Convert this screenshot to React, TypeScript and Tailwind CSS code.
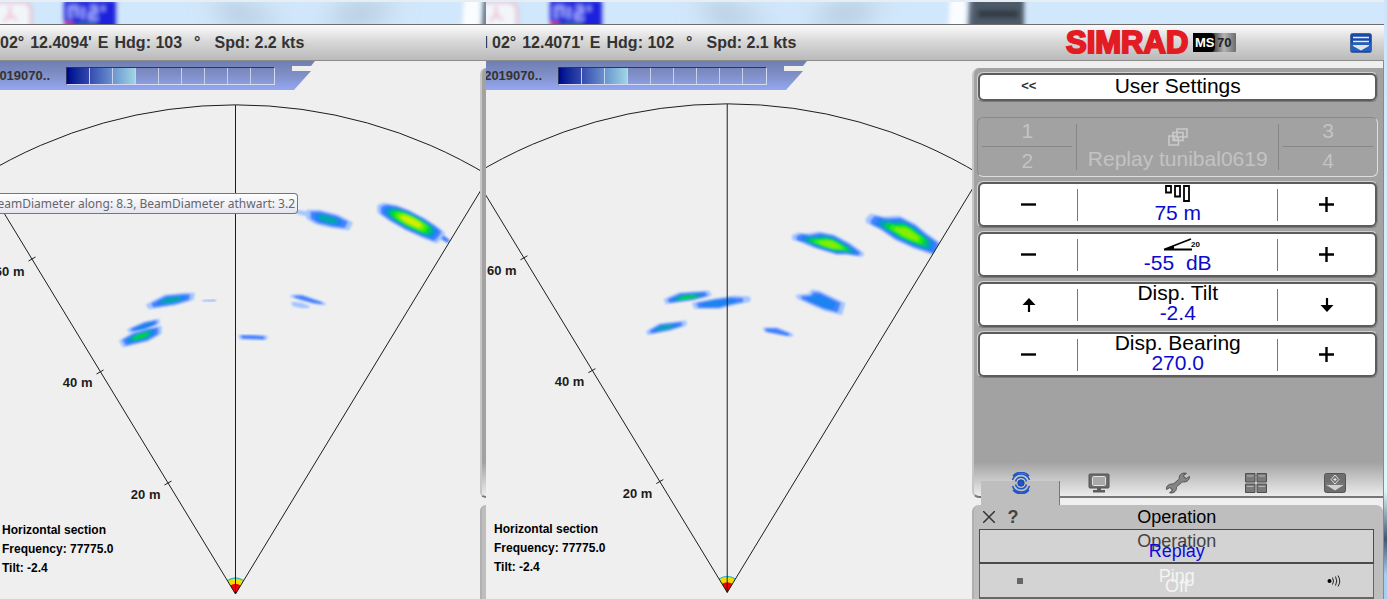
import React from "react";

type Point = [number, number];

interface EchoData {
  core: Point;
  points: Point[];
  level: number;
}

// Palette from weak to strong echo
const ECHO_COLORS = ["#a3c6ff", "#4580ff", "#1a84f0", "#00a8a8", "#00d23c", "#2cf000", "#86ee00", "#d2f000"];

// All echo coordinates are relative to the transducer
const LEFT_ECHOES: EchoData[] = [
  { core: [209, -355], level: 2, points: [[205, -360], [214, -353], [212, -352], [204, -357]] },
  { core: [176, -373], level: 8, points: [[143, -388], [148, -390], [160, -388], [175, -382], [190, -374], [202, -366], [208, -361], [205, -356], [201, -352], [190, -356], [170, -365], [154, -374], [143, -382]] },
  { core: [66, -381], level: 1, points: [[62, -383], [72, -381], [72, -379], [62, -381]] },
  { core: [92, -375], level: 4, points: [[72, -383], [84, -383], [103, -378], [116, -371], [113, -365], [97, -367], [80, -371], [72, -376]] },
  { core: [-64, -294], level: 4, points: [[-88, -289], [-71, -298], [-50, -300], [-42, -300], [-43, -295], [-60, -290], [-86, -286]] },
  { core: [-91, -268], level: 3, points: [[-107, -264], [-91, -271], [-77, -274], [-77, -271], [-91, -264], [-105, -262]] },
  { core: [-95, -258], level: 5, points: [[-115, -253], [-103, -260], [-86, -265], [-75, -267], [-75, -261], [-87, -254], [-112, -248]] },
  { core: [-27, -293], level: 1, points: [[-32, -293], [-21, -294], [-21, -293], [-32, -293]] },
  { core: [73, -295], level: 2, points: [[56, -298], [66, -298], [89, -290], [80, -291], [65, -295]] },
  { core: [65, -289], level: 1, points: [[57, -291], [66, -290], [73, -287], [66, -287], [58, -289]] },
  { core: [17, -257], level: 2, points: [[4, -258], [16, -258], [31, -257], [30, -255], [5, -256]] },
];

const RIGHT_ECHOES: EchoData[] = [
  { core: [181, -359], level: 7, points: [[140, -374], [144, -378], [157, -375], [172, -376], [188, -368], [200, -358], [214, -348], [212, -337], [188, -345], [168, -354], [152, -365], [140, -371]] },
  { core: [104, -348], level: 7, points: [[66, -357], [71, -359], [80, -358], [92, -360], [107, -357], [122, -349], [136, -339], [134, -337], [122, -339], [110, -339], [87, -346], [73, -352], [66, -354]] },
  { core: [-40, -295], level: 5, points: [[-62, -293], [-48, -299], [-19, -301], [-17, -298], [-32, -294], [-61, -290]] },
  { core: [-13, -289], level: 3, points: [[-34, -289], [-13, -293], [7, -296], [22, -295], [22, -292], [7, -289], [-8, -285], [-32, -285]] },
  { core: [-63, -265], level: 4, points: [[-80, -261], [-68, -268], [-42, -271], [-42, -268], [-58, -263], [-79, -259]] },
  { core: [94, -291], level: 3, points: [[70, -297], [82, -298], [85, -302], [92, -301], [117, -289], [114, -279], [98, -283], [82, -290], [71, -295]] },
  { core: [47, -261], level: 2, points: [[37, -264], [50, -264], [65, -258], [64, -257], [48, -260], [38, -262]] },
];

const Echo: React.FC<EchoData> = ({ core, points, level }) => (
  <g filter="url(#echo-soft)" strokeLinejoin="round">
    {ECHO_COLORS.slice(0, level).map((color, i) => {
      const scale = 1 - (i * 0.8) / Math.max(level, 4);
      const d = points
        .map(([x, y]) => `${core[0] + (x - core[0]) * scale},${core[1] + (y - core[1]) * scale}`)
        .join(" ");
      return <polygon key={color} points={d} fill={color} stroke={color} strokeWidth={2.5 * scale} />;
    })}
  </g>
);

interface SonarPlotProps {
  width: number;
  apex: Point;
  echoes: EchoData[];
}

const SonarPlot: React.FC<SonarPlotProps> = ({ width, apex, echoes }) => (
  <svg viewBox={`0 0 ${width} 509`} className="block w-full" role="img" aria-label="Sonar sector">
    <defs>
      <filter id="echo-soft" x="-20%" y="-50%" width="140%" height="200%">
        <feGaussianBlur stdDeviation="1" />
      </filter>
      <clipPath id="sector">
        <path d="M-254 -418 A489 489 0 0 1 254 -418 L0 0 Z" />
      </clipPath>
    </defs>
    <g transform={`translate(${apex[0]} ${apex[1]})`}>
      <g clipPath="url(#sector)">
        {echoes.map((echo) => (
          <Echo key={echo.core.join()} {...echo} />
        ))}
      </g>
      <path d="M0 0 L-8.5 -14 A16 16 0 0 1 8.5 -14 Z" fill="#35b6c8" />
      <path d="M0 0 L-7.8 -13 A15 15 0 0 1 7.8 -13 Z" fill="#f2dc00" />
      <path d="M0 0 L-5.2 -8.6 A10 10 0 0 1 5.2 -8.6 Z" fill="#f00000" />
      <g fill="none" stroke="#1c1c1c">
        <path d="M-254 -418 A489 489 0 0 1 254 -418 L0 0 Z" />
        <path d="M0 0 V-489" />
        <path d="M-207 -333 l7 -4 M-139 -220 l7 -4 M-71 -109 l7 -4" />
      </g>
      <g fill="#1c1c1c" fontSize="13" fontWeight="bold" textAnchor="end">
        <text x="-211" y="-318">60 m</text>
        <text x="-143" y="-207">40 m</text>
        <text x="-75" y="-95">20 m</text>
      </g>
    </g>
  </svg>
);

const SectionInfo: React.FC<{ className: string }> = ({ className }) => (
  <div className={`absolute text-[12px] leading-[19px] font-bold text-black ${className}`}>
    <p>Horizontal section</p>
    <p>Frequency: 77775.0</p>
    <p>Tilt: -2.4</p>
  </div>
);

const Backdrop: React.FC<{ dark?: boolean }> = ({ dark }) => (
  <div className="h-6 overflow-hidden border-t-2 border-[#e6eef4] bg-[#d1e7fb]">
    <svg className="block h-6 w-full" aria-hidden="true">
      <defs>
        <filter id="far-blur" x="-20%" y="-50%" width="140%" height="200%">
          <feGaussianBlur stdDeviation="2" />
        </filter>
        <filter id="wide-blur" x="-50%" y="-100%" width="200%" height="300%">
          <feGaussianBlur stdDeviation="12" />
        </filter>
      </defs>
      <path d="M210 0h30l50 24h-60z M350 0h50l-30 24h-50z" fill="#b3c8dc" filter="url(#wide-blur)" />
      <g filter="url(#far-blur)">
        <rect x="-20" y="0" width="51" height="34" rx="8" fill="#f1f6fa" stroke="#e8bfd2" strokeWidth="3" />
        <path d="M10 4v9l-6 6M10 13l7 5" stroke="#f0a9c4" strokeWidth="2" fill="none" />
        <rect x="64" y="-2" width="52" height="30" fill="#1b22dc" />
        <path d="M70 17V5h7v10M83 5v12M90 5h6v6h-6v6h8M103 4v5" stroke="#a9b2ff" strokeWidth="3" fill="none" />
        <path d="M64 22h9" stroke="#d84a6a" strokeWidth="4" />
        <path d="M76 23h20" stroke="#2d8a7a" strokeWidth="3" />
        <path d="M464 -4h16v34h-18z" fill="#fafdff" />
        <path d="M483 -4h6v34h-8z" fill="#6d7c8e" />
        {dark && <path d="M487 -4h51v34h-54z" fill="#4d5a68" />}
        {dark && <path d="M492 12h40" stroke="#303a45" strokeWidth="8" />}
      </g>
    </svg>
  </div>
);

interface NavReadoutProps {
  minutes: string;
  heading: string;
  speed: string;
}

const NavReadout: React.FC<NavReadoutProps> = ({ minutes, heading, speed }) => (
  <div className="flex shrink-0 gap-1.5 text-base font-bold whitespace-pre text-[#333]">
    <span>02°</span>
    <span>{minutes}'</span>
    <span>E</span>
    <span>Hdg: {heading}</span>
    <span className="pl-1.5">°</span>
    <span className="pl-2">Spd: {speed} kts</span>
  </div>
);

const headerClass =
  "flex h-[37px] items-center overflow-hidden border-y border-t-[#6e6e6e] border-b-[#8c8c8c] bg-linear-to-b from-[#fbfbfb] via-[#d6d6d6] to-[#bababa]";

const FileTab: React.FC<{ name: string; className: string }> = ({ name, className }) => (
  <div
    className={`flex h-[29px] items-center bg-linear-to-b from-[#6f7fb2] via-[#8090c8] to-[#95a7f3] pr-10 [clip-path:polygon(0_0,100%_0,calc(100%-4px)_5px,calc(100%-23px)_5px,calc(100%-23px)_10px,calc(100%-4px)_10px,calc(100%-21px)_100%,0_100%)] ${className}`}
  >
    <div className="flex min-w-0 flex-1 justify-end overflow-hidden pr-4 text-[13px] font-bold text-[#333]">{name}</div>
    <div className="grid h-[18px] w-[209px] grid-cols-9 divide-x divide-[#c9d0ea] border border-t-[#2c3562] border-r-[#d5dbf3] border-b-[#d5dbf3] border-l-[#2c3562]">
      <span className="bg-linear-to-r from-[#00008b] to-[#3346aa]" />
      <span className="bg-linear-to-r from-[#354bb0] to-[#6b8fcb]" />
      <span className="bg-linear-to-r from-[#6a96cf] to-[#a0d4e2]" />
      <span /><span /><span /><span /><span /><span />
    </div>
  </div>
);

const upperPanelClass =
  "rounded-l-[7px] border-l-2 border-b-2 border-l-[#c6c6c6] border-b-[#777] bg-[linear-gradient(to_top,#ececec_0,#a2a2a2_34px)]";
const lowerPanelClass = "rounded-t-[7px] border-l-2 border-l-[#b0b0b0] bg-[#bebebe]";
const rowFrameClass = "rounded-md border border-[#d2d2d2] border-r-[#8c8c8c] border-b-[#7c7c7c]";

const MinusIcon = () => (
  <svg width="15" height="15" viewBox="0 0 15 15"><path d="M0 7.5h15" stroke="#000" strokeWidth="2.4" /></svg>
);
const PlusIcon = () => (
  <svg width="15" height="15" viewBox="0 0 15 15"><path d="M0 7.5h15M7.5 0v15" stroke="#000" strokeWidth="2.4" /></svg>
);
const ArrowIcon: React.FC<{ down?: boolean }> = ({ down }) => (
  <svg width="14" height="14" viewBox="0 0 14 14" className={down ? "rotate-180" : ""}>
    <path d="M7 0l6.5 7h-13z" />
    <path d="M7 4v10" stroke="#000" strokeWidth="2.2" />
  </svg>
);

const RangeIcon = () => (
  <svg width="26" height="18" viewBox="0 0 26 18" fill="none" stroke="#000" strokeWidth="1.8">
    <path d="M1 2h5v6.5H1zM10 2h5v10.500h-5zM19 2h5v15h-5z" />
  </svg>
);

const GainIcon = () => (
  <svg width="38" height="20" viewBox="0 0 38 20" className="overflow-visible">
    <path d="M5 16.500L32 6M5 16.500h28" stroke="#000" strokeWidth="1.800" fill="none" />
    <path d="M5 16.500l10-4v4z" />
    <text x="32" y="14" fontSize="8" fontWeight="bold">20</text>
  </svg>
);

interface SettingRowProps {
  label: React.ReactNode;
  name: string;
  value: string;
  arrows?: boolean;
}

const SettingRow: React.FC<SettingRowProps> = ({ label, name, value, arrows }) => (
  <div className={rowFrameClass}>
    <div className="grid h-[45px] grid-cols-[12fr_25fr_12fr] items-center rounded-md border-2 border-[#5c5c5c] bg-white">
      <button type="button" aria-label={`Decrease ${name}`} className="flex h-full items-center justify-center">
        {arrows ? <ArrowIcon /> : <MinusIcon />}
      </button>
      <button
        type="button"
        className="flex h-8 flex-col items-center justify-center border-x border-[#777] pb-1 text-[21px] leading-5"
      >
        <span className="flex h-5 shrink-0 items-center text-black">{label}</span>
        <span className="whitespace-pre text-[#0a0acc]">{value}</span>
      </button>
      <button type="button" aria-label={`Increase ${name}`} className="flex h-full items-center justify-center">
        {arrows ? <ArrowIcon down /> : <PlusIcon />}
      </button>
    </div>
  </div>
);

const PresetPair: React.FC<{ top: string; bottom: string }> = ({ top, bottom }) => (
  <div className="grid grid-rows-2 divide-y divide-[#868686] px-1">
    <button type="button" disabled className="pb-0.5 leading-6">{top}</button>
    <button type="button" disabled className="pb-0.5 leading-6">{bottom}</button>
  </div>
);

const PresetRow = () => (
  <div className="mt-[15px] mb-1 grid h-[60px] grid-cols-[12fr_25fr_12fr] rounded-md border border-t-[#8a8a8a] border-r-[#dedede] border-b-[#dedede] border-l-[#8a8a8a] text-[21px] text-[#c3c3c3]">
    <PresetPair top="1" bottom="2" />
    <button
      type="button"
      disabled
      className="my-1.5 flex flex-col items-center justify-end gap-0.5 border-x border-[#868686] leading-[22px] whitespace-nowrap"
    >
      <svg width="20" height="18" viewBox="0 0 20 18" fill="#a2a2a2" stroke="#cacaca" strokeWidth="1.6">
        <path d="M9 1h10v8H9zM5 4.500h10v8H5zM1 8h6l3.500 3v6H1z" />
        <path d="M6.500 8v4h4" />
      </svg>
      <span>Replay tunibal0619</span>
    </button>
    <PresetPair top="3" bottom="4" />
  </div>
);

const SonarIcon = () => (
  <svg width="22" height="22" viewBox="0 0 22 22" fill="none" stroke="#1f55c4" strokeWidth="1.5">
    <circle cx="11" cy="11" r="3.200" fill="#1f55c4" stroke="#123a8c" strokeWidth="0.800" />
    <path d="M5.500 9.500a5.700 5.700 0 0 1 11 0M2.500 8a9 9 0 0 1 17 0M3 4a10.500 10.500 0 0 1 16 0" />
    <path d="M5.500 12.500a5.700 5.700 0 0 0 11 0M2.500 14a9 9 0 0 0 17 0M3 18a10.500 10.500 0 0 0 16 0" />
  </svg>
);

const MonitorIcon = () => (
  <svg width="22" height="20" viewBox="0 0 22 20">
    <rect x="1" y="1" width="20" height="14" rx="1" fill="#6b6b6b" stroke="#555" />
    <rect x="4.500" y="3.500" width="13" height="9" rx="1" fill="#a9a9a9" stroke="#e2e2e2" />
    <path d="M9 15h4v2h4v2.500H5V17h4z" fill="#5d5d5d" />
  </svg>
);

const WrenchIcon = () => (
  <svg width="26" height="22" viewBox="0 0 26 22">
    <path
      d="M21.500 1.500c-3.500-1.300-7 .5-7.300 4 0 1 0 1.500-.8 2.200L9 11.500c-.7.500-1.300.5-2.200.5-3.300 0-5.800 2.300-5.300 5.500l3-1.800 2.300 1 .2 2.300-2.500 1.700c3.300 1 6.700-1 7-4.400 0-1 0-1.600.8-2.200l4.300-3.700c.7-.5 1.300-.6 2.100-.5 3.400.1 6-2.300 5.800-5.500l-3 2-2.500-1-.3-2.400z"
      fill="#858585"
      stroke="#515151"
    />
  </svg>
);

const WindowsIcon = () => (
  <svg width="22" height="20" viewBox="0 0 22 20" fill="#7a7a7a" stroke="#4f4f4f">
    <path d="M.5.500h9.500v8.500H.5zM12 .5h9.500v8.500H12zM.5 11h9.500v8.500H.5zM12 11h9.500v8.500H12z" />
    <path d="M2 3h6.500M13.500 3H20M2 13.500h6.500M13.500 13.500H20" stroke="#b5b5b5" />
  </svg>
);

const SetupIcon = () => (
  <svg width="22" height="20" viewBox="0 0 22 20">
    <rect x=".5" y=".5" width="21" height="19" rx="2" fill="#6e6e6e" stroke="#555" />
    <path d="M1.500 11.500h19L11 17.500z" fill="#d0d0d0" />
    <path d="M1.500 9.500h19v2.500h-19z" fill="#777" />
    <path d="M11 2l4 4.500-4 4.500-4-4.500z" fill="#747474" stroke="#dedede" />
    <path d="M9.500 6.500h3M11 5v3" stroke="#ececec" />
  </svg>
);

const TABS = [
  { name: "Operation", icon: <SonarIcon />, active: true },
  { name: "Display", icon: <MonitorIcon /> },
  { name: "Setup", icon: <WrenchIcon /> },
  { name: "Views", icon: <WindowsIcon /> },
  { name: "Installation", icon: <SetupIcon /> },
];

const ControlPanel = () => (
  <aside className="flex flex-[411_1_0%] flex-col gap-[7px] border-r border-[#8a8a8a] pt-[7px]">
    <div className={`flex flex-1 flex-col pt-1 pr-[5px] pl-[3px] ${upperPanelClass}`}>
      <div className={rowFrameClass}>
        <div className="grid h-7 grid-cols-[12fr_25fr_12fr] items-center rounded-md border-2 border-[#5c5c5c] bg-white pb-0.5">
          <button type="button" aria-label="Back" className="text-[13px] font-bold text-[#333]">&lt;&lt;</button>
          <h1 className="text-center text-[21px] leading-5">User Settings</h1>
        </div>
      </div>
      <PresetRow />
      <div className="flex flex-col gap-[3px]">
        <SettingRow label={<RangeIcon />} name="Range" value="75 m" />
        <SettingRow label={<GainIcon />} name="Gain" value="-55  dB" />
        <SettingRow label="Disp. Tilt" name="Disp. Tilt" value="-2.4" arrows />
        <SettingRow label="Disp. Bearing" name="Disp. Bearing" value="270.0" />
      </div>
      <nav className="mt-auto grid h-[27px] grid-cols-5 px-1">
        {TABS.map(({ name, icon, active }) => (
          <button key={name} type="button" aria-label={name} className="relative flex items-center justify-center">
            {active && (
              <span className="absolute inset-x-0 top-3 -bottom-[9px] border-r border-[#777] bg-[#bebebe]" />
            )}
            <span className="relative">{icon}</span>
          </button>
        ))}
      </nav>
    </div>

    <div className={`pr-[9px] pl-[5px] ${lowerPanelClass}`}>
      <div className="grid h-6 grid-cols-[1fr_auto_1fr] items-center">
        <div className="flex items-center gap-3 pl-1">
          <button type="button" aria-label="Close">
            <svg width="12" height="12" viewBox="0 0 12 12" className="block">
              <path d="M0 0l12 12M12 0L0 12" stroke="#333" strokeWidth="1.5" />
            </svg>
          </button>
          <button type="button" aria-label="Help" className="text-lg leading-6 font-bold text-[#444]">?</button>
        </div>
        <h2 className="text-lg leading-6 text-black">Operation</h2>
      </div>
      <button
        type="button"
        className="flex h-[35px] w-full flex-col items-center justify-center border border-b-2 border-[#4a4a4a] bg-[#d3d3d3] text-lg leading-[10px] text-[#444]"
      >
        <span>Operation</span>
        <span className="text-[#0a0ae0]">Replay</span>
      </button>
      <div className="grid h-[35px] grid-cols-[78fr_236fr_78fr] items-center border-x border-b-2 border-[#666] bg-[#d3d3d3] text-lg leading-[10px] text-[#f4f4f4]">
        <button type="button" aria-label="Stop ping" className="flex justify-center">
          <span className="size-1.5 bg-[#666]" />
        </button>
        <div className="flex flex-col items-center">
          <span>Ping</span>
          <span>Off</span>
        </div>
        <button type="button" aria-label="Start ping" className="flex justify-center">
          <svg width="14" height="12" viewBox="0 0 14 12" fill="none" stroke="#222">
            <circle cx="2.500" cy="6" r="2" fill="#000" stroke="none" />
            <path d="M5.500 2.500q2 3.500 0 7M8.500 1.500q2.500 4.500 0 9M11 .5q3.500 5.500 0 11" />
          </svg>
        </button>
      </div>
    </div>
  </aside>
);

const Logo = () => (
  <svg width="176" height="28" viewBox="0 0 176 28" role="img" aria-label="SIMRAD MS70">
    <defs>
      <linearGradient id="badge">
        <stop offset="0.450" stopColor="#3a3a3a" />
        <stop offset="0.720" stopColor="#b4b4b4" />
        <stop offset="1" stopColor="#6c6c6c" />
      </linearGradient>
    </defs>
    <text x="5" y="24" fontSize="31" fontWeight="bold" fill="#e31b23" stroke="#e31b23" strokeWidth="2">
      SIMRAD
    </text>
    <rect x="132" y="4" width="43" height="19" rx="1" fill="url(#badge)" />
    <path d="M132 4h17q5 0 5 5v9q0 5-5 5h-17z" />
    <text x="134" y="18" fontSize="13" fontWeight="bold" fill="#fff">MS</text>
    <text x="156" y="18" fontSize="13" fontWeight="bold" fill="#222">70</text>
  </svg>
);

const MenuButton = () => (
  <button type="button" aria-label="Menu" className="mr-3">
    <svg width="22" height="20" viewBox="0 0 22 20" className="block">
      <rect x=".5" y=".5" width="21" height="19" rx="2" fill="#184aa8" stroke="#4c6590" />
      <path d="M1 10h20v8H1z" fill="#2260c4" />
      <path d="M3 4.500h16M3 8.500h16" stroke="#e8eefa" strokeWidth="1.500" />
      <path d="M3 12h16v1l-8 4.500L3 13z" fill="#e4e4e0" />
    </svg>
  </button>
);

export default function App() {
  return (
    <main className="flex min-h-screen overflow-hidden bg-[#efefef] font-['Liberation_Sans',Arial,sans-serif]">
      <section className="flex min-w-0 flex-[486_1_0%] flex-col">
        <Backdrop />
        <header className={headerClass}>
          <NavReadout minutes="12.4094" heading="103" speed="2.2" />
        </header>
        <div className="flex flex-1">
          <div className="relative min-w-0 flex-1">
            <FileTab name="2019070.." className="w-[315px]" />
            <SonarPlot width={480} apex={[235.5, 504]} echoes={LEFT_ECHOES} />
            <div
              role="tooltip"
              className="absolute top-[132px] left-0 flex h-[21px] w-[298px] items-center justify-end overflow-hidden rounded-r-sm border border-l-0 border-[#777] bg-linear-to-b from-white to-[#e4e5f0] pr-0.5 font-['Noto_Sans',sans-serif] text-[12px] whitespace-nowrap text-[#666]"
            >
              BeamDiameter along: 8.3, BeamDiameter athwart: 3.2
            </div>
            <SectionInfo className="bottom-[21px] left-0.5" />
          </div>
          {/* Edge of the menu panel hidden behind the second window */}
          <div className="flex w-1.5 flex-col gap-[7px] pt-[7px]">
            <div className={`flex-1 ${upperPanelClass}`} />
            <div className="h-[94px] rounded-tl-[7px] border-l-2 border-[#b0b0b0] bg-[#bebebe]" />
          </div>
        </div>
      </section>

      <section className="flex min-w-0 flex-[898_1_0%] flex-col">
        <Backdrop dark />
        <header className={headerClass}>
          <div className="flex w-1.5 shrink-0 justify-end overflow-hidden pr-1 text-base font-bold text-[#333]">N</div>
          <NavReadout minutes="12.4071" heading="102" speed="2.1" />
          <div className="ml-auto flex w-[36%] shrink-0 items-center justify-between">
            <Logo />
            <MenuButton />
          </div>
        </header>
        <div className="flex flex-1">
          <div className="relative min-w-0 flex-[487_1_0%]">
            <FileTab name="2019070.." className="w-[321px]" />
            <SonarPlot width={487} apex={[241.5, 503]} echoes={RIGHT_ECHOES} />
            <SectionInfo className="bottom-[22px] left-2" />
          </div>
          <ControlPanel />
        </div>
      </section>
      <div className="w-[3px] bg-[linear-gradient(#cfe4f9_0,#dff6fa_82%,#44566e_90%,#a9cdf0_96%)]" />
    </main>
  );
}
